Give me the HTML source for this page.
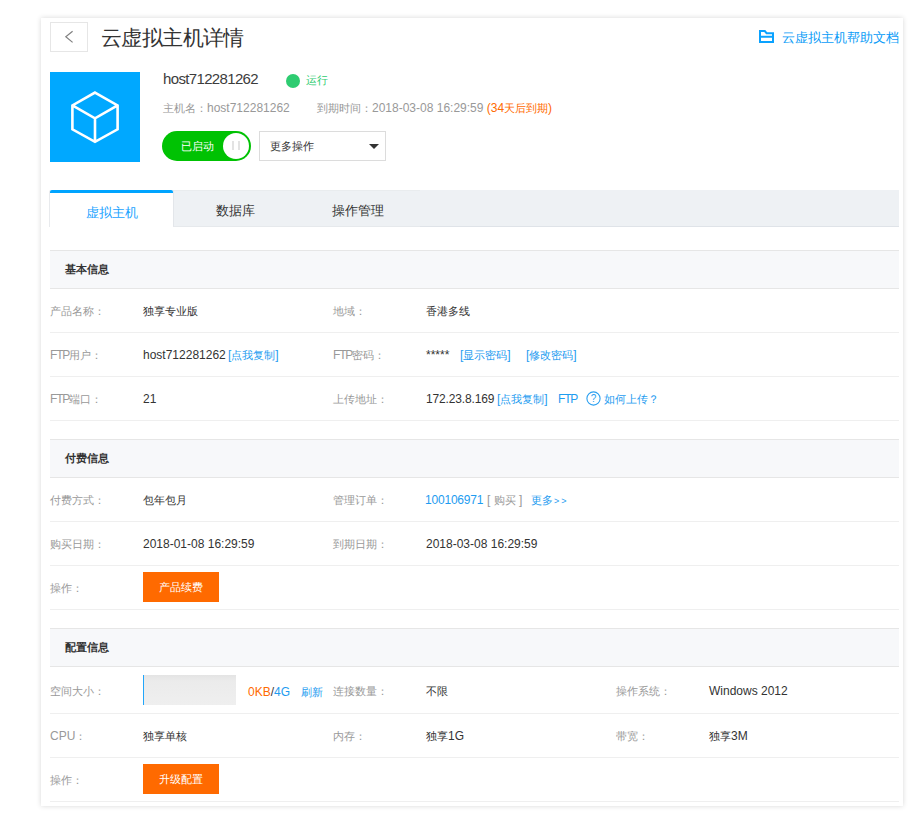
<!DOCTYPE html>
<html><head><meta charset="utf-8">
<style>
*{margin:0;padding:0;box-sizing:border-box}
html,body{width:915px;height:816px;overflow:hidden;background:#fff}
body{position:relative;font-family:"Liberation Sans",sans-serif;color:#333;font-size:12px}
.a{position:absolute;white-space:nowrap;line-height:1}
#box{position:absolute;left:41px;top:18px;width:862px;height:788px;background:#fff;box-shadow:0 0 5px rgba(0,0,0,0.16)}
.back{position:absolute;left:50px;top:22px;width:38px;height:30px;border:1px solid #e6e6e6}
.title{left:101px;top:27px;font-size:21px;color:#333;letter-spacing:-0.6px}
.help{left:782px;top:31px;font-size:13px;color:#0a9cf7}
.sq{position:absolute;left:50px;top:72px;width:90px;height:90px;background:#00a8ff}
.host{left:163px;top:71px;font-size:15px;color:#3c3c3c;letter-spacing:-0.65px}
.dot{position:absolute;left:286px;top:74px;width:14px;height:14px;border-radius:50%;background:#2ecc71}
.run{left:306px;top:74px;font-size:12px;color:#2ecc71}
.sub{left:163px;top:102px;font-size:12px;color:#999}
.tog{position:absolute;left:162px;top:131px;width:89px;height:30px;border-radius:15px;background:#00c203}
.knob{position:absolute;left:61px;top:2px;width:26px;height:26px;border-radius:50%;background:#fff}
.dd{position:absolute;left:259px;top:131px;width:127px;height:30px;border:1px solid #dcdcdc}
.tabbar{position:absolute;left:50px;top:190px;width:849px;height:37px;background:#eef1f4}
.tab{position:absolute;top:0;height:37px;font-size:13px;line-height:41px;text-align:center;color:#333}
.hdr{position:absolute;left:50px;width:849px;height:39px;background:#f7f8fa;border-top:1px solid #e6e6e6;border-bottom:1px solid #e6e6e6}
.hdr span{position:absolute;left:15px;top:12px;font-size:12px;font-weight:bold;line-height:1;color:#333}
.row{position:absolute;left:50px;width:849px;border-bottom:1px solid #efefef}
.lb{position:absolute;font-size:12px;color:#999;line-height:1;white-space:nowrap}
.vl{position:absolute;font-size:12px;color:#333;line-height:1;white-space:nowrap}
.lk{color:#1e9cf0}
.btn{position:absolute;left:93px;width:76px;height:30px;background:#ff6a00;color:#fff;font-size:12px;line-height:30px;text-align:center}
i{font-style:normal;font-size:11.2px;font-weight:500}
.hdr i{font-weight:bold;font-size:11.1px}
.title i,.help i,.tab i{font-size:inherit}
.ftp{font-weight:normal;letter-spacing:-1.2px}
</style></head><body>
<div id="box"></div>
<div class="back"><svg width="36" height="28" style="position:absolute;left:0;top:0"><path d="M21.6 8.2 L14.8 13.8 L21.6 19.4" fill="none" stroke="#808080" stroke-width="1.2"/></svg></div>
<div class="a title"><i>云虚拟主机详情</i></div>
<svg class="a" style="left:759px;top:30px" width="15" height="13"><path d="M1 1 H5.8 L7.6 3.2 H14 V12 H1 Z M1 6.7 H14" fill="none" stroke="#0aa2ff" stroke-width="2"/></svg>
<div class="a help"><i>云虚拟主机帮助文档</i></div>

<div class="sq"><svg width="90" height="90"><path d="M45 20.6 L67.6 33.4 L67.6 57.3 L45 69.8 L22.4 57.3 L22.4 33.4 Z M22.4 33.4 L45 46.3 L67.6 33.4 M45 46.3 V69.8" fill="none" stroke="#fff" stroke-width="2.6" stroke-linejoin="miter"/></svg></div>
<div class="a host">host712281262</div>
<div class="dot"></div>
<div class="a run"><i>运行</i></div>
<div class="a sub"><i>主机名：</i>host712281262</div>
<div class="a sub" style="left:317px"><i>到期时间：</i>2018-03-08 16:29:59 <span style="color:#ff6a00">(34<i>天后到期</i>)</span></div>

<div class="tog"><span class="a" style="left:19px;top:9px;color:#fff;font-size:12px"><i>已启动</i></span><div class="knob"><svg width="26" height="26"><path d="M10 8 V17 M16 8 V17" stroke="#ddd" stroke-width="1.6"/></svg></div></div>
<div class="dd"><span class="a" style="left:10px;top:8px;font-size:12px;color:#333"><i>更多操作</i></span><svg class="a" style="left:109px;top:12px" width="10" height="6"><path d="M0 0 H10 L5 5 Z" fill="#333"/></svg></div>

<div class="tabbar">
 <div class="tab" style="left:123px;width:123px;border-top:1px solid #e9ecee;border-bottom:1px solid #e6e9ec;border-left:1px solid #e3e6ea;line-height:39px"><i>数据库</i></div>
 <div class="tab" style="left:246px;width:124px;border-top:1px solid #e9ecee;border-bottom:1px solid #e6e9ec;line-height:39px"><i>操作管理</i></div>
 <div style="position:absolute;left:370px;right:0;bottom:0;height:1px;background:#dfe3e8"></div>
 <div class="tab" style="left:0;width:123px;height:37px;background:#fff;box-shadow:-1px 0 0 #e8eaed;border-top:3px solid #00a4ff;border-radius:2px 2px 0 0;line-height:40px;color:#1aa3ff"><i>虚拟主机</i></div>
</div>

<!-- 基本信息 -->
<div class="hdr" style="top:250px"><span><i>基本信息</i></span></div>
<div class="row" style="top:289px;height:44px">
 <span class="lb" style="left:0;top:16px"><i>产品名称：</i></span><span class="vl" style="left:93px;top:16px"><i>独享专业版</i></span>
 <span class="lb" style="left:283px;top:16px"><i>地域：</i></span><span class="vl" style="left:376px;top:16px"><i>香港多线</i></span>
</div>
<div class="row" style="top:333px;height:44px">
 <span class="lb" style="left:0;top:16px"><b class="ftp">FTP</b><i>用户：</i></span><span class="vl" style="left:93px;top:16px">host712281262</span><span class="vl lk" style="left:178px;top:16px">[<i>点我复制</i>]</span>
 <span class="lb" style="left:283px;top:16px"><b class="ftp">FTP</b><i>密码：</i></span><span class="vl" style="left:376px;top:16px">*****</span><span class="vl lk" style="left:410px;top:16px">[<i>显示密码</i>]</span><span class="vl lk" style="left:476px;top:16px">[<i>修改密码</i>]</span>
</div>
<div class="row" style="top:377px;height:44px">
 <span class="lb" style="left:0;top:16px"><b class="ftp">FTP</b><i>端口：</i></span><span class="vl" style="left:93px;top:16px">21</span>
 <span class="lb" style="left:283px;top:16px"><i>上传地址：</i></span><span class="vl" style="left:376px;top:16px;letter-spacing:-0.15px">172.23.8.169</span><span class="vl lk" style="left:447px;top:16px">[<i>点我复制</i>]</span><span class="vl lk ftp" style="left:508px;top:16px">FTP</span><svg class="a" style="left:536px;top:14px" width="15" height="15"><circle cx="7.5" cy="7.5" r="6.6" fill="none" stroke="#2a9ff0" stroke-width="1.1"/><text x="7.5" y="11.3" font-size="10" text-anchor="middle" fill="#2a9ff0" font-family="Liberation Sans">?</text></svg><span class="vl lk" style="left:554px;top:16px"><i>如何上传？</i></span>
</div>

<!-- 付费信息 -->
<div class="hdr" style="top:439px"><span><i>付费信息</i></span></div>
<div class="row" style="top:478px;height:44px">
 <span class="lb" style="left:0;top:16px"><i>付费方式：</i></span><span class="vl" style="left:93px;top:16px"><i>包年包月</i></span>
 <span class="lb" style="left:283px;top:16px"><i>管理订单：</i></span><span class="vl lk" style="left:375px;top:16px;letter-spacing:-0.2px">100106971</span><span class="vl" style="left:437px;top:16px;color:#999">[ <i>购买</i> ]</span><span class="vl lk" style="left:481px;top:16px"><i>更多</i><b style="font-weight:normal;font-size:9px;letter-spacing:2px;margin-left:1px">&gt;&gt;</b></span>
</div>
<div class="row" style="top:522px;height:44px">
 <span class="lb" style="left:0;top:16px"><i>购买日期：</i></span><span class="vl" style="left:93px;top:16px">2018-01-08 16:29:59</span>
 <span class="lb" style="left:283px;top:16px"><i>到期日期：</i></span><span class="vl" style="left:376px;top:16px">2018-03-08 16:29:59</span>
</div>
<div class="row" style="top:566px;height:44px">
 <span class="lb" style="left:0;top:16px"><i>操作：</i></span><div class="btn" style="top:6px"><i>产品续费</i></div>
</div>

<!-- 配置信息 -->
<div class="hdr" style="top:628px"><span><i>配置信息</i></span></div>
<div class="row" style="top:667px;height:47px">
 <span class="lb" style="left:0;top:18px"><i>空间大小：</i></span>
 <div style="position:absolute;left:93px;top:8px;width:93px;height:30px;background:linear-gradient(#e4e4e4,#ebebeb 20%,#efefef);border-left:1px solid #22a6fa"></div>
 <span class="vl" style="left:198px;top:19px"><span style="color:#ff6a00">0KB</span>/<span class="lk">4G</span></span><span class="vl lk" style="left:251px;top:19px"><i>刷新</i></span>
 <span class="lb" style="left:283px;top:18px"><i>连接数量：</i></span><span class="vl" style="left:376px;top:18px"><i>不限</i></span>
 <span class="lb" style="left:566px;top:18px"><i>操作系统：</i></span><span class="vl" style="left:659px;top:18px">Windows 2012</span>
</div>
<div class="row" style="top:714px;height:44px">
 <span class="lb" style="left:0;top:16px">CPU<i>：</i></span><span class="vl" style="left:93px;top:16px"><i>独享单核</i></span>
 <span class="lb" style="left:283px;top:16px"><i>内存：</i></span><span class="vl" style="left:376px;top:16px"><i>独享</i>1G</span>
 <span class="lb" style="left:566px;top:16px"><i>带宽：</i></span><span class="vl" style="left:659px;top:16px"><i>独享</i>3M</span>
</div>
<div class="row" style="top:758px;height:44px">
 <span class="lb" style="left:0;top:16px"><i>操作：</i></span><div class="btn" style="top:6px"><i>升级配置</i></div>
</div>
</body></html>
